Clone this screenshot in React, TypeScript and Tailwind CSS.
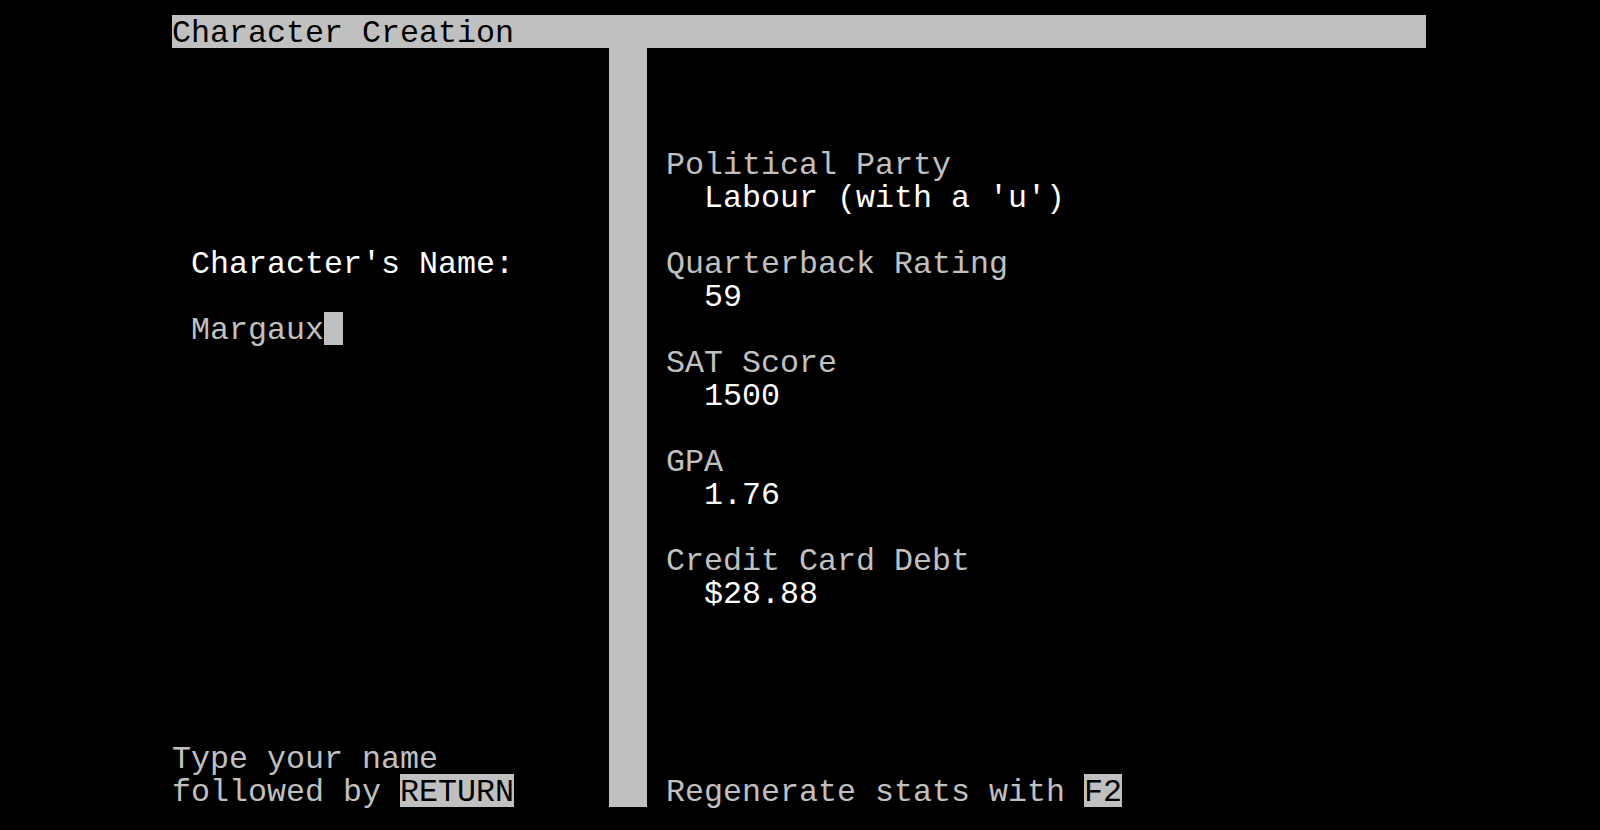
import * as React from "react"

// one text cell is 19px wide, one row is 33px tall
const Row = (props: { children?: React.ReactNode, className?: string }) => (
    <div className={"box-border h-[33px] whitespace-pre pt-[4px] leading-[31px] " + (props.className ?? "")}>
        {props.children}
    </div>
)

const Blank = (props: { count: number }) => (
    <>
        {Array.from({ length: props.count }).map((_, i) => (
            <Row key={i} />
        ))}
    </>
)

// highlighted cells fill the whole row height
const Key = (props: { children?: React.ReactNode }) => (
    <span className="-mt-[4px] box-border inline-block h-[33px] min-w-[19px] bg-[#c0c0c0] pt-[4px] align-top leading-[31px] text-black">
        {props.children}
    </span>
)

const stats = [
    { label: "Political Party", value: "Labour (with a 'u')" },
    { label: "Quarterback Rating", value: "59" },
    { label: "SAT Score", value: "1500" },
    { label: "GPA", value: "1.76" },
    { label: "Credit Card Debt", value: "$28.88" },
]

const App = () => {
    return (
        <div
            className="min-h-[830px] w-full bg-black pl-[172px] pt-[15px] text-[31.67px] text-[#c0c0c0]"
            style={{ fontFamily: '"Courier New", "Liberation Mono", monospace' }}
        >
            <Row className="w-[1254px] bg-[#c0c0c0] text-black">Character Creation</Row>

            <div className="flex">
                <div className="w-[437px]">
                    <Blank count={6} />
                    <Row>
                        <span className="text-white"> Character's Name:</span>
                    </Row>
                    <Blank count={1} />
                    <Row>
                        {" Margaux"}
                        <Key />
                    </Row>
                    <Blank count={12} />
                    <Row>Type your name</Row>
                    <Row>
                        {"followed by "}
                        <Key>RETURN</Key>
                    </Row>
                </div>

                <div className="h-[759px] w-[38px] bg-[#c0c0c0]" />

                <div className="flex-1">
                    <Blank count={3} />
                    {stats.map((s) => (
                        <React.Fragment key={s.label}>
                            <Row> {s.label}</Row>
                            <Row>
                                <span className="text-white">{"   " + s.value}</span>
                            </Row>
                            <Blank count={1} />
                        </React.Fragment>
                    ))}
                    <Blank count={4} />
                    <Row>
                        {" Regenerate stats with "}
                        <Key>F2</Key>
                    </Row>
                </div>
            </div>
        </div>
    )
}

export default App
